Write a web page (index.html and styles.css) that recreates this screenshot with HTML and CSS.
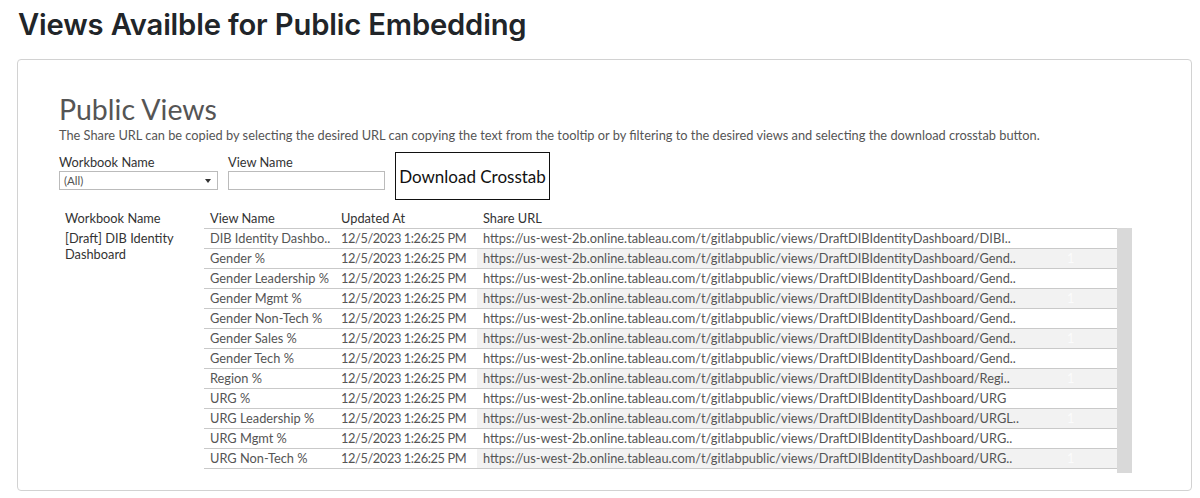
FILE: index.html
```html
<!DOCTYPE html>
<html>
<head>
<meta charset="utf-8">
<link rel="stylesheet" href="styles.css">
</head>
<body>
<h1 class="page-title">Views Availble for Public Embedding</h1>
<div class="card">
  <h2 class="viz-title">Public Views</h2>
  <p class="desc">The Share URL can be copied by selecting the desired URL can copying the text from the tooltip or by filtering to the desired views and selecting the download crosstab button.</p>
  <div class="filters">
    <div class="filter">
      <div class="flabel">Workbook Name</div>
      <div class="select"><span>(All)</span><span class="arrow"></span></div>
    </div>
    <div class="filter">
      <div class="flabel">View Name</div>
      <div class="input"></div>
    </div>
    <div class="btn">Download Crosstab</div>
  </div>
  <div class="table">
    <div class="thead">
      <div class="c-wb">Workbook Name</div>
      <div class="c-vn">View Name</div>
      <div class="c-up">Updated At</div>
      <div class="c-url">Share URL</div>
    </div>
    <div class="tbody">
      <div class="wb-cell">[Draft] DIB Identity Dashboard</div>
      <div class="rows">
        <div class="row"><div class="c-vn">DIB Identity Dashbo..</div><div class="c-up">12/5/2023 1:26:25 PM</div><div class="c-url">https://us-west-2b.online.tableau.com/t/gitlabpublic/views/DraftDIBIdentityDashboard/DIBI..</div></div>
        <div class="row alt"><div class="c-vn">Gender %</div><div class="c-up">12/5/2023 1:26:25 PM</div><div class="c-url">https://us-west-2b.online.tableau.com/t/gitlabpublic/views/DraftDIBIdentityDashboard/Gend..<span class="one">1</span></div></div>
        <div class="row"><div class="c-vn">Gender Leadership %</div><div class="c-up">12/5/2023 1:26:25 PM</div><div class="c-url">https://us-west-2b.online.tableau.com/t/gitlabpublic/views/DraftDIBIdentityDashboard/Gend..</div></div>
        <div class="row alt"><div class="c-vn">Gender Mgmt %</div><div class="c-up">12/5/2023 1:26:25 PM</div><div class="c-url">https://us-west-2b.online.tableau.com/t/gitlabpublic/views/DraftDIBIdentityDashboard/Gend..<span class="one">1</span></div></div>
        <div class="row"><div class="c-vn">Gender Non-Tech %</div><div class="c-up">12/5/2023 1:26:25 PM</div><div class="c-url">https://us-west-2b.online.tableau.com/t/gitlabpublic/views/DraftDIBIdentityDashboard/Gend..</div></div>
        <div class="row alt"><div class="c-vn">Gender Sales %</div><div class="c-up">12/5/2023 1:26:25 PM</div><div class="c-url">https://us-west-2b.online.tableau.com/t/gitlabpublic/views/DraftDIBIdentityDashboard/Gend..<span class="one">1</span></div></div>
        <div class="row"><div class="c-vn">Gender Tech %</div><div class="c-up">12/5/2023 1:26:25 PM</div><div class="c-url">https://us-west-2b.online.tableau.com/t/gitlabpublic/views/DraftDIBIdentityDashboard/Gend..</div></div>
        <div class="row alt"><div class="c-vn">Region %</div><div class="c-up">12/5/2023 1:26:25 PM</div><div class="c-url">https://us-west-2b.online.tableau.com/t/gitlabpublic/views/DraftDIBIdentityDashboard/Regi..<span class="one">1</span></div></div>
        <div class="row"><div class="c-vn">URG %</div><div class="c-up">12/5/2023 1:26:25 PM</div><div class="c-url">https://us-west-2b.online.tableau.com/t/gitlabpublic/views/DraftDIBIdentityDashboard/URG</div></div>
        <div class="row alt"><div class="c-vn">URG Leadership %</div><div class="c-up">12/5/2023 1:26:25 PM</div><div class="c-url">https://us-west-2b.online.tableau.com/t/gitlabpublic/views/DraftDIBIdentityDashboard/URGL..<span class="one">1</span></div></div>
        <div class="row"><div class="c-vn">URG Mgmt %</div><div class="c-up">12/5/2023 1:26:25 PM</div><div class="c-url">https://us-west-2b.online.tableau.com/t/gitlabpublic/views/DraftDIBIdentityDashboard/URG..</div></div>
        <div class="row alt"><div class="c-vn">URG Non-Tech %</div><div class="c-up">12/5/2023 1:26:25 PM</div><div class="c-url">https://us-west-2b.online.tableau.com/t/gitlabpublic/views/DraftDIBIdentityDashboard/URG..<span class="one">1</span></div></div>
        <div class="row"><div class="c-vn">URG Sales %</div><div class="c-up">12/5/2023 1:26:25 PM</div><div class="c-url">https://us-west-2b.online.tableau.com/t/gitlabpublic/views/DraftDIBIdentityDashboard/URG..</div></div>
      </div>
      <div class="scroll"></div>
    </div>
  </div>
</div>
</body>
</html>
```
FILE: styles.css
```css
* { box-sizing: border-box; }
html, body { margin: 0; padding: 0; background: #fff; }
body { padding: 0 9px 0 17px; font-family: Inter, "Liberation Sans", Arial, sans-serif; }

.page-title {
  margin: 7px 0 0 1px;
  font-size: 29.2px;
  line-height: 36px;
  font-weight: 600;
  color: #212529;
  letter-spacing: -0.15px;
}

.card {
  margin-top: 16px;
  width: 1175px;
  height: 432px;
  border: 1px solid #d2d2d2;
  border-radius: 4px;
  padding: 32px 0 0 41px;
  font-family: Lato, "Noto Sans", sans-serif;
  overflow: hidden;
}

.viz-title {
  margin: 0;
  font-size: 28.5px;
  line-height: 34px;
  font-weight: 400;
  color: #555;
}

.desc {
  margin: 1px 0 0 0;
  font-size: 12.8px;
  line-height: 16px;
  color: #555;
}

.filters {
  display: flex;
  align-items: flex-start;
  margin-top: 9px;
}
.filter { margin-right: 10px; }
.flabel {
  font-size: 12.8px;
  line-height: 16px;
  color: #333;
  margin-top: 2px;
  margin-bottom: 1px;
}
.select {
  width: 159px;
  height: 19px;
  border: 1px solid #bbb;
  display: flex;
  align-items: center;
  justify-content: space-between;
  padding: 0 6px 0 4px;
  font-size: 11.5px;
  color: #555;
}
.arrow {
  width: 0; height: 0;
  border-left: 3px solid transparent;
  border-right: 3px solid transparent;
  border-top: 4px solid #333;
}
.input {
  width: 157px;
  height: 19px;
  border: 1px solid #bbb;
}
.btn {
  width: 155px;
  height: 48px;
  border: 1px solid #111;
  display: flex;
  align-items: center;
  justify-content: center;
  font-size: 17px;
  color: #111;
}

.table { margin-top: 8px; font-size: 12.8px; }
.thead { display: flex; height: 20px; line-height: 20px; color: #333; }
.thead .c-wb { width: 145px; padding-left: 6px; }
.c-vn { width: 131px; padding-left: 6px; white-space: nowrap; overflow: hidden; }
.c-up { width: 142px; padding-left: 6px; white-space: nowrap; }
.rows .c-up { letter-spacing: -0.4px; }
.c-url { width: 640px; padding-left: 6px; white-space: nowrap; position: relative; }

.tbody { display: flex; height: 245px; }
.wb-cell {
  width: 145px;
  padding: 2px 24px 0 6px;
  line-height: 16px;
  color: #333;
}
.rows {
  width: 913px;
  height: 245px;
  overflow: hidden;
  color: #555;
}
.row {
  display: flex;
  height: 20px;
  line-height: 19px;
  border-top: 1px solid #c9c9c9;
}
.row.alt .c-url { background: #f2f2f2; }
.one {
  position: absolute;
  left: 590px;
  top: 0;
  color: #fbfbfb;
}
.scroll {
  width: 15px;
  height: 245px;
  background: #d9d9d9;
}
```
